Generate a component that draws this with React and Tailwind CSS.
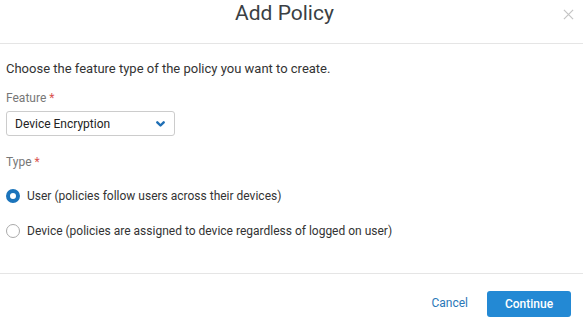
import React, { useState } from 'react'

const App = () => {
    const [type, setType] = useState('user')

    return (
        <div className="w-[583px] h-[324px] bg-white text-[#333] font-['Roboto',sans-serif] flex flex-col">
            <div className="relative h-[44px] border-b border-[#e5e5e5] flex items-start justify-center pr-[14px]">
                <div className="text-[21px] leading-[26px] text-[#3a3f44]">Add Policy</div>
                <button className="absolute right-[9px] top-[9px] text-[#c4c4c4]">
                    <svg width="11" height="11" viewBox="0 0 12 12" stroke="currentColor" strokeWidth="1.3">
                        <path d="M1 1 L11 11 M11 1 L1 11" />
                    </svg>
                </button>
            </div>

            <div className="flex-1 border-b border-[#e5e5e5] px-[6px] pt-[16px] text-[12px]">
                <div className="leading-[18px] text-[13px] text-[#333]">Choose the feature type of the policy you want to create.</div>

                <div className="mt-[11px] leading-[18px] text-[#777]">Feature <span className="text-[#d9534f]">*</span></div>

                <div className="mt-[4px] w-[169px] h-[25px] border border-[#ccc] rounded-[3px] flex items-center justify-between pl-[8px] pr-[9px]">
                    <span className="text-[#222]">Device Encryption</span>
                    <svg width="9" height="6" viewBox="0 0 9 6" fill="none" stroke="#1f6fb5" strokeWidth="2.4" strokeLinecap="round" strokeLinejoin="round">
                        <path d="M1.3 1.3 L4.5 4.5 L7.7 1.3" />
                    </svg>
                </div>

                <div className="mt-[17px] leading-[18px] text-[#777]">Type <span className="text-[#d9534f]">*</span></div>

                <div className="mt-[16px] flex flex-col gap-[17px]">
                    <label className="flex items-center gap-[7px] cursor-pointer" onClick={() => setType('user')}>
                        <span className={type === 'user'
                            ? 'w-[14px] h-[14px] rounded-full border-[4px] border-[#1b74bb] bg-white'
                            : 'w-[14px] h-[14px] rounded-full border border-[#aaa] bg-white'} />
                        <span className="leading-[18px]">User (policies follow users across their devices)</span>
                    </label>
                    <label className="flex items-center gap-[7px] cursor-pointer" onClick={() => setType('device')}>
                        <span className={type === 'device'
                            ? 'w-[14px] h-[14px] rounded-full border-[4px] border-[#1b74bb] bg-white'
                            : 'w-[14px] h-[14px] rounded-full border border-[#aaa] bg-white'} />
                        <span className="leading-[18px]">Device (policies are assigned to device regardless of logged on user)</span>
                    </label>
                </div>
            </div>

            <div className="h-[50px] flex items-center justify-end pr-[12px] gap-[19px] text-[12px]">
                <button className="text-[#2a78b8] mt-[7px]">Cancel</button>
                <button className="w-[84px] h-[26px] rounded-[3px] bg-[#2389d4] text-white font-medium mt-[9px]">Continue</button>
            </div>
        </div>
    )
}

export default App
